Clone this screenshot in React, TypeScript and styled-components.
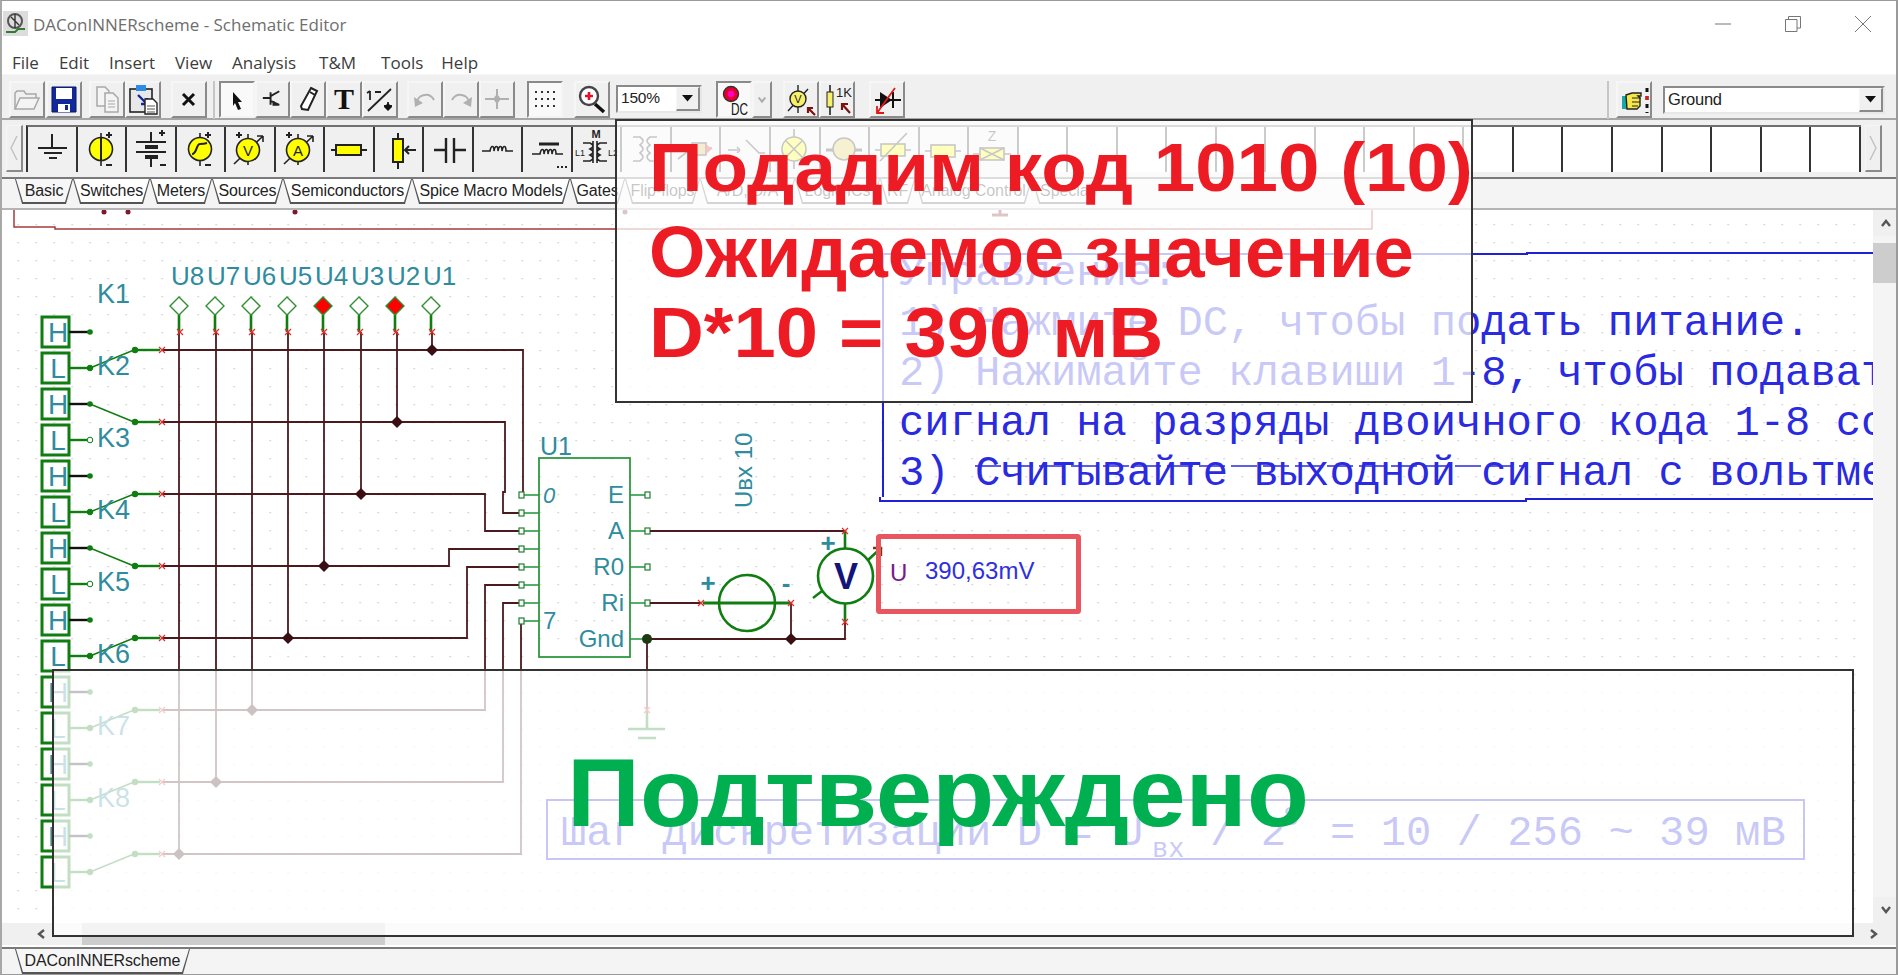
import React from "react";
import styled, { createGlobalStyle } from "styled-components";

const Global = createGlobalStyle`
  html, body { margin: 0; padding: 0; background: #fff; overflow: hidden; }
  * { box-sizing: border-box; }
`;

const Root = styled.div`
  position: relative;
  width: 1898px;
  height: 975px;
  overflow: hidden;
  display: flex;
  flex-direction: column;
  background: #fff;
  font-family: "Liberation Sans", Arial, sans-serif;
`;
const WindowFrame = styled.div`
  position: absolute;
  inset: 0;
  border-top: 1px solid #9a9a9a;
  border-right: 2px solid #9a9a9a;
  border-bottom: 1px solid #9a9a9a;
  border-left: 2px solid #a8a8a8;
  pointer-events: none;
`;
const TitleBar = styled.div`
  height: 37px;
  flex: none;
  display: flex;
  align-items: center;
  padding: 10px 0 0 3px;
  color: #6e6e6e;
  font: 17px "Open Sans", "Noto Sans", sans-serif;
`;
const TitleText = styled.span`
  margin: 2px 0 0 5px;
  flex: 1;
`;
const WinButton = styled.div`
  width: 70px;
  display: flex;
  justify-content: center;
  align-items: center;
`;
const MenuBar = styled.div`
  height: 37px;
  flex: none;
  display: flex;
  gap: 20px;
  align-items: center;
  padding: 13px 0 0 12px;
  color: #3c3c3c;
  font: 17px "Open Sans", "Noto Sans", sans-serif;
`;
const MenuItem = styled.span<{ $ml?: number }>`
  margin-left: ${(p) => p.$ml ?? 0}px;
`;
const ToolBar = styled.div`
  height: 46px;
  flex: none;
  display: flex;
  align-items: flex-start;
  padding: 6px 0 0 9px;
  background: #f0f0f0;
  border-top: 1px solid #f6f6f6;
  border-bottom: 2px solid #a6a6a6;
`;
const ToolButton = styled.div<{ $w?: number; $ml?: number; $on?: boolean }>`
  width: ${(p) => p.$w ?? 36}px;
  height: 37px;
  flex: none;
  margin-left: ${(p) => p.$ml ?? 0}px;
  display: flex;
  align-items: center;
  justify-content: center;
  background: ${(p) => (p.$on ? "#f9f9f9" : "#f0f0f0")};
  border-style: solid;
  border-width: 2px;
  border-color: ${(p) => (p.$on ? "#8a8a8a #f4f4f4 #f4f4f4 #8a8a8a" : "#f6f6f6 #8a8a8a #8a8a8a #f6f6f6")};
`;
const Separator = styled.div<{ $ml: number }>`
  width: 2px;
  height: 38px;
  flex: none;
  margin-left: ${(p) => p.$ml}px;
  background: #c6c6c6;
`;
const ComboBox = styled.div<{ $w: number; $ml: number; $mt?: number; $fs?: number }>`
  width: ${(p) => p.$w}px;
  height: 28px;
  flex: none;
  margin: ${(p) => p.$mt ?? 4}px 0 0 ${(p) => p.$ml}px;
  display: flex;
  background: #fff;
  border-style: solid;
  border-width: 2px;
  border-color: #8a8a8a #e8e8e8 #e8e8e8 #8a8a8a;
  font: ${(p) => p.$fs ?? 15.5}px "Liberation Sans", sans-serif;
  color: #222;
`;
const ComboText = styled.div`
  flex: 1;
  padding: 2px 0 0 3px;
  letter-spacing: -0.2px;
`;
const ComboArrow = styled.div`
  width: 24px;
  display: flex;
  align-items: center;
  justify-content: center;
  background: #f0f0f0;
  border-style: solid;
  border-width: 1px 2px 2px 1px;
  border-color: #f6f6f6 #8a8a8a #8a8a8a #f6f6f6;
`;
const Palette = styled.div`
  height: 59px;
  flex: none;
  display: flex;
  align-items: flex-start;
  padding: 5px 0 0 6px;
  background: #f0f0f0;
  border-bottom: 2px solid #7a7a7a;
`;
const Scroller = styled.div<{ $ml?: number }>`
  width: 17px;
  height: 47px;
  flex: none;
  margin-left: ${(p) => p.$ml ?? 0}px;
  display: flex;
  align-items: center;
  justify-content: center;
  background: #f0f0f0;
  border-style: solid;
  border-width: 1px 2px 2px 1px;
  border-color: #f6f6f6 #8a8a8a #8a8a8a #f6f6f6;
`;
const CellRow = styled.div`
  margin-left: 3px;
  display: flex;
  height: 47px;
  border-top: 2px solid #707070;
  border-left: 2px solid #333;
`;
const Cell = styled.div<{ $empty?: boolean }>`
  width: 49.54px;
  height: 100%;
  flex: none;
  display: flex;
  align-items: center;
  justify-content: center;
  background: ${(p) => (p.$empty ? "#ffffff" : "#f0f0f0")};
  border-right: 2px solid #333;
`;
const TabStrip = styled.div`
  height: 31px;
  flex: none;
  display: flex;
  padding: 0 0 0 15px;
  background: #f4f4f4;
  border-bottom: 2px solid #b4b4b4;
`;
const TabOuter = styled.div<{ $w: number }>`
  width: ${(p) => p.$w}px;
  height: 25px;
  flex: none;
  padding: 0 1px 2px 1px;
  background: #555;
  clip-path: polygon(0 0, 100% 0, calc(100% - 7px) 100%, 7px 100%);
`;
const TabInner = styled.div<{ $active?: boolean }>`
  height: 100%;
  display: flex;
  align-items: center;
  justify-content: center;
  padding-top: 1px;
  background: ${(p) => (p.$active ? "#f6f6f6" : "#fff")};
  clip-path: polygon(0 0, 100% 0, calc(100% - 7px) 100%, 7px 100%);
  font: 16px "Liberation Sans", sans-serif;
  letter-spacing: -0.1px;
  color: #222;
  white-space: nowrap;
`;
const Workspace = styled.div`
  flex: 1;
  display: flex;
  min-height: 0;
`;
const CanvasArea = styled.div`
  width: 1873px;
  flex: none;
  background: #fff;
  overflow: hidden;
`;
const VScroll = styled.div`
  flex: 1;
  display: flex;
  flex-direction: column;
  align-items: stretch;
  background: #f4f4f4;
`;
const ScrollEnd = styled.div`
  height: 26px;
  display: flex;
  align-items: center;
  justify-content: center;
  flex: none;
  background: #f0f0f0;
`;
const VThumb = styled.div`
  height: 40px;
  margin-top: 7px;
  flex: none;
  background: #cdcdcd;
`;
const Spacer = styled.div`
  flex: 1;
`;
const HScroll = styled.div`
  height: 22px;
  flex: none;
  display: flex;
  align-items: stretch;
  background: #f0f0f0;
`;
const HEnd = styled.div<{ $w: number }>`
  width: ${(p) => p.$w}px;
  flex: none;
  display: flex;
  align-items: center;
  justify-content: center;
`;
const HThumb = styled.div`
  width: 303px;
  flex: none;
  background: #cdcdcd;
`;
const BottomTabs = styled.div`
  height: 28px;
  flex: none;
  margin-top: 2px;
  display: flex;
  padding-left: 15px;
  background: #f4f4f4;
  border-top: 2px solid #7a7a7a;
`;
const BottomTab = styled(TabOuter)`
  height: 25px;
`;
const Overlay = styled.div<{ $pt: number; $pl: number }>`
  position: absolute;
  padding: ${(p) => p.$pt}px 0 0 ${(p) => p.$pl}px;
  background: rgba(255, 255, 255, 0.75);
  border: 2.5px solid #333;
  font-family: "Liberation Sans", Arial, sans-serif;
  font-weight: 700;
  line-height: 1;
  white-space: nowrap;
`;
const TopOverlay = styled(Overlay)`
  left: 615px;
  top: 119px;
  width: 858px;
  height: 284px;
  color: #ed1c24;
`;
const BottomOverlay = styled(Overlay)`
  left: 52px;
  top: 669px;
  width: 1802px;
  height: 268px;
  color: #00b050;
`;
const OverlayLine = styled.div<{ $mt?: number; $fs: number; $sx?: number }>`
  margin-top: ${(p) => p.$mt ?? 0}px;
  font-size: ${(p) => p.$fs}px;
  transform-origin: left center;
  transform: scaleX(${(p) => p.$sx ?? 1});
`;
const SchemText = styled.text`
  font-family: "Liberation Sans", Arial, sans-serif;
  fill: #2f8c9e;
`;
const NoteText = styled.text<{ $small?: boolean }>`
  font-family: "Liberation Mono", "Courier New", monospace;
  font-size: ${(p) => (p.$small ? 27 : 42.2)}px;
  fill: #2a2ae0;
`;
const IconText = styled.text`
  font-family: "Liberation Sans", Arial, sans-serif;
`;

const Svg36: React.FC<{ children: React.ReactNode; w?: number; h?: number }> = ({ children, w = 32, h = 33 }) => (
  <svg width={w} height={h} viewBox={`0 0 ${w} ${h}`} fill="none">
    {children}
  </svg>
);
const Cellsvg: React.FC<{ children: React.ReactNode }> = ({ children }) => (
  <svg width="47" height="45" viewBox="0 0 47 45" fill="none" stroke="#222" strokeWidth="1.6">
    {children}
  </svg>
);
const Plus = ({ x, y }: { x: number; y: number }) => <path d={`M${x - 3} ${y}h6M${x} ${y - 3}v6`} stroke="#222" strokeWidth="2" />;
const Dash = ({ x, y }: { x: number; y: number }) => <path d={`M${x - 3} ${y}h6`} stroke="#222" strokeWidth="2" />;
const Coil = ({ x, y }: { x: number; y: number }) => (
  <path d={`M${x} ${y}h8c1-6 4-6 4 0c1-6 4-6 4 0c1-6 4-6 4 0c1-6 4-6 4 0h7`} strokeWidth="1.6" />
);

const Chevron = ({ dir, color = "#555", size = 12 }: { dir: "u" | "d" | "l" | "r"; color?: string; size?: number }) => {
  const pts = { u: "2,9 6,4 10,9", d: "2,3 6,8 10,3", l: "9,2 4,6 9,10", r: "3,2 8,6 3,10" }[dir];
  return (
    <svg width={size} height={size} viewBox="0 0 12 12" fill="none">
      <polyline points={pts} stroke={color} strokeWidth="2.4" />
    </svg>
  );
};
const DownArrow = () => (
  <svg width="11" height="7" viewBox="0 0 11 7">
    <polygon points="0,0 11,0 5.5,6.5" fill="#111" />
  </svg>
);

const menu: [string, number][] = [
  ["File", 0],
  ["Edit", 0],
  ["Insert", 0],
  ["View", 0],
  ["Analysis", 0],
  ["T&M", 3],
  ["Tools", 5],
  ["Help", -2],
];
const tabs: [string, number][] = [
  ["Basic", 58],
  ["Switches", 77],
  ["Meters", 62],
  ["Sources", 71],
  ["Semiconductors", 129],
  ["Spice Macro Models", 158],
  ["Gates", 55],
  ["Flip-flops", 75],
  ["A/D, D/A", 95],
  ["Logic ICs", 85],
  ["RF", 35],
  ["Analog Control", 117],
  ["Special", 68],
];

const AppIcon = () => (
  <svg width="25" height="25" viewBox="0 0 25 25" fill="none">
    <rect width="25" height="25" fill="#dcdcdc" />
    <circle cx="12" cy="10" r="7" stroke="#555" strokeWidth="2" />
    <path d="M8 6l8 8M12 3v14" stroke="#333" strokeWidth="1.4" />
    <path d="M3 21h9l3-3h7" stroke="#2e7d32" strokeWidth="2" />
  </svg>
);

const toolIcons = {
  open: (
    <Svg36>
      <path d="M4 26V10l2-2h7l2 3h10v4" stroke="#a8a8a8" strokeWidth="1.5" />
      <path d="M4 26l5-11h19l-5 11z" fill="#f4f4f4" stroke="#a8a8a8" strokeWidth="1.5" />
    </Svg36>
  ),
  save: (
    <Svg36>
      <path d="M4 4h24v25H4z" fill="#12279a" stroke="#0a1760" strokeWidth="1" />
      <rect x="8" y="5" width="16" height="11" fill="#fff" />
      <rect x="10" y="21" width="12" height="8" fill="#fff" />
      <rect x="17" y="22" width="3" height="5" fill="#12279a" />
    </Svg36>
  ),
  copy: (
    <Svg36>
      <path d="M6 4h8l4 4v15H6z" fill="#f4f4f4" stroke="#a8a8a8" strokeWidth="1.5" />
      <path d="M14 10h8l5 5v14H14z" fill="#f4f4f4" stroke="#a8a8a8" strokeWidth="1.5" />
      <path d="M17 18h7M17 21h7M17 24h7" stroke="#a8a8a8" />
    </Svg36>
  ),
  paste: (
    <Svg36>
      <rect x="3" y="6" width="22" height="23" fill="#e8e8e8" stroke="#222" strokeWidth="1.6" />
      <rect x="9" y="2" width="10" height="6" fill="#2e8be6" />
      <path d="M11 12l9 9m0-6v6h-6" stroke="#12279a" strokeWidth="2.4" />
      <path d="M18 16h8l4 4v11H18z" fill="#fff" stroke="#222" strokeWidth="1.4" />
      <path d="M20 23h8M20 26h8M20 29h8" stroke="#555" />
    </Svg36>
  ),
  del: (
    <Svg36>
      <path d="M10 11l11 11M21 11L10 22" stroke="#111" strokeWidth="3" />
    </Svg36>
  ),
  select: (
    <Svg36>
      <path d="M12 9l9 10h-4l3 7-3 1-3-7-2 3z" fill="#111" />
    </Svg36>
  ),
  wire: (
    <Svg36>
      <path d="M6 15h8M14 9v13M14 13l9-5M14 18l9 4M23 22h-6v-4" stroke="#222" strokeWidth="2" />
    </Svg36>
  ),
  pen: (
    <Svg36>
      <path d="M19 5l6 3-9 19-6-1-1-3z" fill="#fff" stroke="#222" strokeWidth="2" />
      <path d="M18 9l5 3" stroke="#222" strokeWidth="2" />
    </Svg36>
  ),
  text: (
    <Svg36>
      <text x="16" y="26" textAnchor="middle" fontFamily="Liberation Serif, serif" fontWeight="700" fontSize="30" fill="#111">
        T
      </text>
    </Svg36>
  ),
  flip: (
    <Svg36>
      <path d="M4 28L27 6M6 8v9M3 10l3-2M11 9h6M20 23h8M24 19v8" stroke="#222" strokeWidth="1.8" />
      <path d="M24 20l4 4-4 4-4-4z" fill="#111" />
    </Svg36>
  ),
  undo: (
    <Svg36>
      <path d="M8 21c-1-9 12-13 17-4" stroke="#b0b0b0" strokeWidth="2" />
      <path d="M5 14l1 10 8-4z" fill="#b0b0b0" />
    </Svg36>
  ),
  redo: (
    <Svg36>
      <path d="M24 21c1-9-12-13-17-4" stroke="#b0b0b0" strokeWidth="2" />
      <path d="M27 14l-1 10-8-4z" fill="#b0b0b0" />
    </Svg36>
  ),
  star: (
    <Svg36>
      <path d="M4 16h24M16 6v20" stroke="#b0b0b0" strokeWidth="2" />
      <path d="M16 11l4 5-4 5-4-5z" fill="#b0b0b0" />
    </Svg36>
  ),
  grid: (
    <Svg36>
      <path d="M6 9h20M6 16h20M6 23h20" stroke="#333" strokeWidth="2" strokeDasharray="2 4" />
    </Svg36>
  ),
  zoom: (
    <Svg36>
      <path d="M19 21l9 8" stroke="#111" strokeWidth="3.4" />
      <circle cx="13" cy="13" r="9" fill="#fff" stroke="#444" strokeWidth="2.4" />
      <path d="M9 13h8M13 9v8" stroke="#e8112d" strokeWidth="2.6" />
    </Svg36>
  ),
  dc: (
    <Svg36 w={32}>
      <circle cx="13" cy="11" r="7.5" fill="#e4002b" stroke="#333" strokeWidth="1.4" />
      <circle cx="13" cy="11" r="3.2" fill="#f0c" />
      <IconText x="13" y="32" fontSize="16" fill="#111" textLength="17" lengthAdjust="spacingAndGlyphs">
        DC
      </IconText>
    </Svg36>
  ),
  meter: (
    <Svg36>
      <path d="M13 2v28M3 28L23 6" stroke="#222" strokeWidth="1.4" />
      <circle cx="13" cy="16" r="8" fill="#f7f06a" stroke="#222" strokeWidth="1.4" />
      <IconText x="13" y="20" textAnchor="middle" fontSize="11" fill="#222">
        V
      </IconText>
      <path d="M30 32l-7-7m0 5v-5h5" stroke="#7a1212" strokeWidth="2.2" />
    </Svg36>
  ),
  ohm: (
    <Svg36>
      <path d="M9 2v30" stroke="#222" strokeWidth="1.6" />
      <rect x="6" y="9" width="6" height="15" fill="#f7f06a" stroke="#222" />
      <IconText x="15" y="14" fontSize="13" fill="#222">
        1K
      </IconText>
      <path d="M29 30l-8-9m0 6v-6h6" stroke="#7a1212" strokeWidth="2.2" />
    </Svg36>
  ),
  diode: (
    <Svg36>
      <path d="M4 17h26M22 9v16" stroke="#111" strokeWidth="2" />
      <path d="M9 9l12 8-12 8z" fill="#111" />
      <path d="M24 5L6 30m0-7v7h7" stroke="#e01818" strokeWidth="1.8" />
    </Svg36>
  ),
  hand: (
    <Svg36>
      <path d="M4 13h5v13H4z" fill="#19a7a7" />
      <path d="M8 12l6-2h9v3h-3l2 2v8l-3 3H9z" fill="#f7e64a" stroke="#222" strokeWidth="1.4" />
      <path d="M14 15h9M14 19h8M14 23h6" stroke="#222" strokeWidth="1.2" />
      <path d="M29 5v4M29 13v4M29 21v4M29 29v1" stroke="#111" strokeWidth="3" />
      <path d="M29 13v4" stroke="#e01818" strokeWidth="3" />
    </Svg36>
  ),
};

const Source = ({ children }: { children?: React.ReactNode }) => (
  <>
    <path d="M23 6v33" />
    <circle cx="23" cy="22" r="11.5" fill="#ff0" stroke="#222" strokeWidth="1.6" />
    {children}
  </>
);
const Meter = ({ label }: { label: string }) => (
  <>
    <path d="M22 7v31M8 37L37 9M37 9h-6M37 9v6" />
    <circle cx="22" cy="23" r="11.5" fill="#ff0" stroke="#222" strokeWidth="1.6" />
    <IconText x="22" y="28.5" textAnchor="middle" fontSize="15" fill="#222" stroke="none">
      {label}
    </IconText>
    <Plus x={13} y={8} />
  </>
);
const paletteIcons: React.ReactNode[] = [
  <Cellsvg key="g">
    <path d="M24 7v14M10 21h29M16 26h18M21 31h8" strokeWidth="2" />
  </Cellsvg>,
  <Cellsvg key="v">
    <Source>
      <path d="M23 10v24" strokeWidth="2" />
    </Source>
    <Plus x={31} y={8} />
    <Dash x={31} y={38} />
  </Cellsvg>,
  <Cellsvg key="b">
    <path d="M24 5v10M9 15h30M24 30v10M9 25h30" strokeWidth="2" />
    <path d="M18 20h13M18 30h13" strokeWidth="4" />
    <Plus x={35} y={6} />
    <Dash x={36} y={38} />
  </Cellsvg>,
  <Cellsvg key="s">
    <Source>
      <path d="M15 27c5 0 4-10 8-10s4 0 7-1" strokeWidth="2" />
    </Source>
    <Plus x={31} y={8} />
    <Dash x={31} y={38} />
  </Cellsvg>,
  <Cellsvg key="m1">
    <Meter label="V" />
  </Cellsvg>,
  <Cellsvg key="m2">
    <Meter label="A" />
  </Cellsvg>,
  <Cellsvg key="r">
    <path d="M6 23h36" strokeWidth="2" />
    <rect x="11" y="18" width="25" height="10" fill="#ff0" stroke="#222" strokeWidth="2" />
  </Cellsvg>,
  <Cellsvg key="p">
    <path d="M23 6v36" strokeWidth="2" />
    <rect x="18" y="12" width="10" height="23" fill="#ff0" stroke="#222" strokeWidth="2" />
    <path d="M41 23H30m4-4l-4 4 4 4" strokeWidth="2" />
  </Cellsvg>,
  <Cellsvg key="c">
    <path d="M9 23h12M30 23h11M21 11v25M29 11v25" strokeWidth="2.4" />
  </Cellsvg>,
  <Cellsvg key="l">
    <Coil x={8} y={24} />
  </Cellsvg>,
  <Cellsvg key="lc">
    <path d="M15 17h20" strokeWidth="3" />
    <Coil x={8} y={27} />
    <path d="M33 40h2M37 40h2M41 40h2" strokeWidth="2" />
  </Cellsvg>,
  <Cellsvg key="t">
    <IconText x="23" y="11" textAnchor="middle" fontSize="11" fontWeight="700" fill="#222" stroke="none">
      M
    </IconText>
    <path d="M10 16h7c4 2 4 4 0 6c4 2 4 4 0 6c4 2 4 4 0 6h-7M34 16h-7c-4 2-4 4 0 6c-4 2-4 4 0 6c-4 2-4 4 0 6h7M20 14v22M24 14v22" strokeWidth="1.6" />
    <IconText x="2" y="29" fontSize="9" fill="#222" stroke="none">
      L1
    </IconText>
    <IconText x="35" y="29" fontSize="9" fill="#222" stroke="none">
      L2
    </IconText>
  </Cellsvg>,
  <Cellsvg key="t2">
    <path d="M10 10h7c4 3 4 5 0 8c4 3 4 5 0 8c4 3 4 5 0 8h-7M34 10h-7c-4 3-4 5 0 8c-4 3-4 5 0 8c-4 3-4 5 0 8h7" strokeWidth="1.6" />
  </Cellsvg>,
  <Cellsvg key="led">
    <path d="M6 32L20 21M26 21h14" />
    <rect x="20" y="16" width="14" height="12" fill="#d6b84a" />
    <path d="M34 17l6 5-6 5z" fill="#e01818" stroke="none" />
  </Cellsvg>,
  <Cellsvg key="sw">
    <path d="M6 23h10M18 23l-3-3m3 3l-3 3M24 13l13 13h6" />
  </Cellsvg>,
  <Cellsvg key="lamp">
    <path d="M23 2v8M23 34v8" />
    <circle cx="23" cy="22" r="12" fill="#ff0" stroke="#222" />
    <path d="M15 14l16 16M31 14L15 30" />
  </Cellsvg>,
  <Cellsvg key="bulb">
    <path d="M5 23h8M33 23h8" strokeWidth="3" />
    <circle cx="23" cy="22" r="11" fill="#d6c84a" stroke="#222" />
  </Cellsvg>,
  <Cellsvg key="var">
    <path d="M5 23h36" />
    <rect x="11" y="17" width="24" height="12" fill="#ff0" stroke="#222" />
    <path d="M10 34L37 6" />
  </Cellsvg>,
  <Cellsvg key="fuse">
    <path d="M5 24h36" />
    <rect x="11" y="18" width="24" height="12" fill="#ff0" stroke="#222" />
  </Cellsvg>,
  <Cellsvg key="z">
    <IconText x="23" y="14" textAnchor="middle" fontSize="14" fill="#222" stroke="none">
      Z
    </IconText>
    <path d="M4 27h38" />
    <rect x="11" y="21" width="24" height="12" fill="#ff0" stroke="#222" />
    <path d="M11 21l24 12M35 21L11 33" />
  </Cellsvg>,
];

const Cross = ({ x, y }: { x: number; y: number }) => (
  <path d={`M${x - 3} ${y - 3}l6 6M${x + 3} ${y - 3}l-6 6`} stroke="#e52a2a" strokeWidth="1.2" fill="none" />
);
const Node = ({ x, y, fill = "#3a0e12" }: { x: number; y: number; fill?: string }) => (
  <polygon points={`${x - 6},${y} ${x},${y - 6} ${x + 6},${y} ${x},${y + 6}`} fill={fill} />
);
const Pin = ({ x, y }: { x: number; y: number }) => (
  <rect x={x - 2.5} y={y - 3} width="5" height="6" fill="#fff" stroke="#1f7f2f" strokeWidth="1.2" />
);

const WIRE = "#4a1a1e";
const G = "#0f7d10";
const outs: number[][] = [
  [162, 350, 523, 350, 523, 495],
  [162, 422, 505, 422, 505, 492, 503, 492, 503, 513, 522, 513],
  [162, 494, 485, 494, 485, 531, 522, 531],
  [162, 566, 449, 566, 449, 549, 522, 549],
  [162, 638, 467, 638, 467, 567, 522, 567],
  [162, 710, 485, 710, 485, 585, 522, 585],
  [162, 782, 503, 782, 503, 603, 522, 603],
  [162, 854, 521, 854, 521, 621],
];
const probes = [
  { x: 179, wx: 179, end: 854, name: "U8", on: false },
  { x: 215, wx: 216, end: 782, name: "U7", on: false },
  { x: 251, wx: 252, end: 710, name: "U6", on: false },
  { x: 287, wx: 288, end: 638, name: "U5", on: false },
  { x: 323, wx: 324, end: 566, name: "U4", on: true },
  { x: 359, wx: 361, end: 494, name: "U3", on: false },
  { x: 395, wx: 397, end: 422, name: "U2", on: true },
  { x: 431, wx: 432, end: 350, name: "U1", on: false },
];
const hSelected = [false, true, false, true, false, false, false, false];
const leftPins = [495, 513, 531, 549, 567, 585, 603, 621];
const rightPins: [string, number][] = [
  ["E", 495],
  ["A", 531],
  ["R0", 567],
  ["Ri", 603],
  ["Gnd", 639],
];

const Schematic = () => (
  <svg width="1873" height="713" viewBox="0 210 1873 713" fill="none" style={{ display: "block" }}>
    <defs>
      <pattern id="dots" x="-0.5" y="8" width="18" height="18" patternUnits="userSpaceOnUse">
        <rect width="1.3" height="1.3" fill="#c4c4c4" />
      </pattern>
    </defs>
    <rect x="10" y="215" width="1850" height="700" fill="url(#dots)" />

    <polyline points="14,210 14,227 55,227 55,229 1372,229 1372,210" stroke="#a83a3a" strokeWidth="1.5" />
    {[104, 128, 295, 625].map((x) => (
      <circle key={x} cx={x} cy="212" r="2.5" fill="#7a1a2a" />
    ))}
    <path d="M1000 210v4M992 215h16" stroke="#7a1a2a" strokeWidth="3" />

    {outs.map((pts, i) => (
      <polyline key={i} points={pts.join(",")} stroke={WIRE} strokeWidth="1.8" />
    ))}

    {probes.map((p) => (
      <g key={p.name}>
        <line x1={p.wx} y1="332" x2={p.wx} y2={p.end} stroke={WIRE} strokeWidth="1.8" />
        <Node x={p.wx} y={p.end} />
        <path d={`M${p.x} 315V332`} stroke={G} strokeWidth="2.6" />
        <polygon
          points={`${p.x - 9},306 ${p.x},297 ${p.x + 9},306 ${p.x},315`}
          fill={p.on ? "#f00" : "#fff"}
          stroke="#2d8f2d"
          strokeWidth="1.4"
        />
        <Cross x={p.x + 1} y={332} />
        <SchemText x={p.x - 8} y="285" fontSize="26">
          {p.name}
        </SchemText>
      </g>
    ))}

    {hSelected.map((h, i) => {
      const yH = 332 + i * 72;
      const yL = 368 + i * 72;
      const yO = 350 + i * 72;
      return (
        <g key={i}>
          <rect x="42" y={yH - 15} width="27" height="30" fill="#fff" stroke={G} strokeWidth="3" />
          <rect x="42" y={yL - 15} width="27" height="30" fill="#fff" stroke={G} strokeWidth="3" />
          <SchemText x="58" y={yH + 10} fontSize="28" textAnchor="middle">
            H
          </SchemText>
          <SchemText x="58" y={yL + 10} fontSize="28" textAnchor="middle">
            L
          </SchemText>
          <path d={`M69 ${yH}H90`} stroke="#111" strokeWidth="2.4" />
          <path d={`M69 ${yL}H90`} stroke={G} strokeWidth="2.4" />
          <circle cx="90" cy={yH} r="2.8" fill={G} />
          <circle cx="90" cy={yL} r="2.8" fill={h ? "#fff" : G} stroke={G} strokeWidth="1" />
          <path d={`M90 ${h ? yH : yL}L134 ${yO}`} stroke={G} strokeWidth="1.4" />
          <path d={`M134 ${yO}H160`} stroke={G} strokeWidth="2.4" />
          <circle cx="135" cy={yO} r="3.2" fill={G} />
          <Cross x={162} y={yO} />
          <SchemText x="97" y={303 + i * 72} fontSize="27">
            {`K${i + 1}`}
          </SchemText>
        </g>
      );
    })}

    <rect x="539" y="458" width="91" height="199" fill="none" stroke="#2d9a3f" strokeWidth="1.8" />
    <SchemText x="540" y="455" fontSize="25">
      U1
    </SchemText>
    <SchemText x="543" y="503" fontSize="22" fontStyle="italic">
      0
    </SchemText>
    <SchemText x="543" y="629" fontSize="24">
      7
    </SchemText>
    {leftPins.map((y) => (
      <g key={y}>
        <path d={`M524 ${y}H539`} stroke="#2d9a3f" strokeWidth="1.6" />
        <Pin x={521.5} y={y} />
      </g>
    ))}
    {rightPins.map(([label, y]) => (
      <g key={label}>
        <path d={`M630 ${y}H645`} stroke="#2d9a3f" strokeWidth="1.6" />
        <Pin x={647.5} y={y} />
        <SchemText x="624" y={y + 8} fontSize="24" textAnchor="end">
          {label}
        </SchemText>
      </g>
    ))}
    <SchemText x="752" y="508" fontSize="24" transform="rotate(-90 752 508)">
      Uвх 10
    </SchemText>

    <polyline points="650,531 845,531" stroke={WIRE} strokeWidth="1.8" />
    <polyline points="650,603 701,603" stroke={WIRE} strokeWidth="1.8" />
    <polyline points="647,639 845,639 845,622" stroke={WIRE} strokeWidth="1.8" />
    <polyline points="791,603 791,639" stroke={WIRE} strokeWidth="1.8" />
    <polyline points="647,639 647,710" stroke={WIRE} strokeWidth="1.8" />
    <Node x={791} y={639} />
    <circle cx="647" cy="639" r="5" fill="#1f3a12" />

    <path d="M647 711V728M628 729H665M638 738H656" stroke={G} strokeWidth="2.6" />
    <Cross x={647} y={710} />

    <ellipse cx="747" cy="603" rx="28" ry="28" stroke={G} strokeWidth="2.6" />
    <path d="M703 603H790" stroke={G} strokeWidth="3" />
    <Cross x={701} y={603} />
    <Cross x={791} y={603} />
    <SchemText x="708" y="592" fontSize="26" fontWeight="700" textAnchor="middle">
      +
    </SchemText>
    <SchemText x="786" y="592" fontSize="26" fontWeight="700" textAnchor="middle">
      -
    </SchemText>

    <path d="M845 531V548M845 604V622" stroke={G} strokeWidth="2.6" />
    <circle cx="845.5" cy="576" r="27.5" stroke={G} strokeWidth="2.6" fill="#fff" />
    <path d="M813 598l9-7" stroke={G} strokeWidth="2.4" />
    <path d="M868 560l13-12" stroke={G} strokeWidth="2.6" />
    <path d="M873 548h8v8" stroke="#7a3a10" strokeWidth="2.4" />
    <Cross x={845} y={531} />
    <Cross x={845} y={622} />
    <SchemText x="828" y="552" fontSize="26" fontWeight="700" textAnchor="middle">
      +
    </SchemText>
    <text x="846" y="589" fontFamily="Liberation Sans, sans-serif" fontSize="36" fontWeight="700" fill="#141478" textAnchor="middle">
      V
    </text>

    <rect x="878.5" y="536.5" width="200" height="75" rx="1" stroke="#e8565f" strokeWidth="5" />
    <text x="890" y="581" fontFamily="Liberation Sans, sans-serif" fontSize="24" fill="#7a1a8a">
      U
    </text>
    <text x="925" y="579" fontFamily="Liberation Sans, sans-serif" fontSize="24" fill="#2f2fe0">
      390,63mV
    </text>

    <polyline points="883,497 883,254 1527,254 1527,253 1873,253" stroke="#2020d8" strokeWidth="2" />
    <polyline points="880,497 880,501 1526,501 1526,499 1873,499" stroke="#2020d8" strokeWidth="2" />
    <path d="M975 466H1525" stroke="#2a2ae0" strokeWidth="1.4" strokeDasharray="26 6" />
    <NoteText x="899" y="285">Управление:</NoteText>
    <NoteText x="899" y="335">1) Нажмите DC, чтобы подать питание.</NoteText>
    <NoteText x="899" y="385">2) Нажимайте клавиши 1-8, чтобы подавать</NoteText>
    <NoteText x="899" y="435">сигнал на разряды двоичного кода 1-8 со</NoteText>
    <NoteText x="899" y="485">3) Считывайте выходной сигнал с вольтметра</NoteText>

    <rect x="547" y="800" width="1257" height="59" stroke="#2020d8" strokeWidth="2" />
    <NoteText x="561" y="845">Шаг дискретизации D = U</NoteText>
    <NoteText x="1152" y="857" $small>вх</NoteText>
    <NoteText x="1210" y="845">/ 2</NoteText>
    <NoteText x="1283" y="825" $small>8</NoteText>
    <NoteText x="1330" y="845">= 10 / 256 ~ 39 мВ</NoteText>
  </svg>
);

export default function App() {
  return (
    <Root>
      <Global />
      <TitleBar>
        <AppIcon />
        <TitleText>DAConINNERscheme - Schematic Editor</TitleText>
        <WinButton>
          <svg width="16" height="2" viewBox="0 0 16 2">
            <path d="M0 1h16" stroke="#777" strokeWidth="1" />
          </svg>
        </WinButton>
        <WinButton>
          <svg width="16" height="16" viewBox="0 0 16 16" fill="none" stroke="#777">
            <path d="M.5 3.5h11.5v12H.5zM3.5 3.5v-3h12v11.5H12" />
          </svg>
        </WinButton>
        <WinButton>
          <svg width="16" height="16" viewBox="0 0 16 16" fill="none" stroke="#777">
            <path d="M0 0l16 16M16 0L0 16" />
          </svg>
        </WinButton>
      </TitleBar>
      <MenuBar>
        {menu.map(([m, ml]) => (
          <MenuItem key={m} $ml={ml}>
            {m}
          </MenuItem>
        ))}
      </MenuBar>
      <ToolBar>
        <ToolButton>{toolIcons.open}</ToolButton>
        <ToolButton $ml={1}>{toolIcons.save}</ToolButton>
        <ToolButton $ml={7}>{toolIcons.copy}</ToolButton>
        <ToolButton $ml={0}>{toolIcons.paste}</ToolButton>
        <ToolButton $ml={10}>{toolIcons.del}</ToolButton>
        <Separator $ml={6} />
        <ToolButton $ml={4} $on>
          {toolIcons.select}
        </ToolButton>
        <ToolButton $w={35}>{toolIcons.wire}</ToolButton>
        <ToolButton>{toolIcons.pen}</ToolButton>
        <ToolButton>{toolIcons.text}</ToolButton>
        <ToolButton>{toolIcons.flip}</ToolButton>
        <ToolButton $ml={9}>{toolIcons.undo}</ToolButton>
        <ToolButton>{toolIcons.redo}</ToolButton>
        <ToolButton>{toolIcons.star}</ToolButton>
        <ToolButton $ml={12} $on>
          {toolIcons.grid}
        </ToolButton>
        <ToolButton $ml={11}>{toolIcons.zoom}</ToolButton>
        <ComboBox $w={86} $ml={6}>
          <ComboText>150%</ComboText>
          <ComboArrow>
            <DownArrow />
          </ComboArrow>
        </ComboBox>
        <ToolButton $ml={14} $on>
          {toolIcons.dc}
        </ToolButton>
        <ToolButton $w={20}>
          <Chevron dir="d" color="#aaa" size={10} />
        </ToolButton>
        <ToolButton $ml={11}>{toolIcons.meter}</ToolButton>
        <ToolButton>{toolIcons.ohm}</ToolButton>
        <ToolButton $ml={14}>{toolIcons.diode}</ToolButton>
        <Separator $ml={702} />
        <ToolButton $ml={7}>{toolIcons.hand}</ToolButton>
        <ComboBox $w={222} $ml={11} $mt={5} $fs={16.5}>
          <ComboText>Ground</ComboText>
          <ComboArrow>
            <DownArrow />
          </ComboArrow>
        </ComboBox>
      </ToolBar>
      <Palette>
        <Scroller>
          <svg width="8" height="26" viewBox="0 0 8 26" fill="none">
            <path d="M7 1L1 13l6 12" stroke="#c0c0c0" strokeWidth="1.4" />
          </svg>
        </Scroller>
        <CellRow>
          {Array.from({ length: 37 }).map((_, i) => (
            <Cell key={i} $empty={i >= 20}>
              {paletteIcons[i]}
            </Cell>
          ))}
        </CellRow>
        <Scroller $ml={4}>
          <svg width="8" height="26" viewBox="0 0 8 26" fill="none">
            <path d="M1 1l6 12-6 12" stroke="#c0c0c0" strokeWidth="1.4" />
          </svg>
        </Scroller>
      </Palette>
      <TabStrip>
        {tabs.map(([t, w], i) => (
          <TabOuter key={t} $w={w}>
            <TabInner $active={i === 0}>{t}</TabInner>
          </TabOuter>
        ))}
      </TabStrip>
      <Workspace>
        <CanvasArea>
          <Schematic />
        </CanvasArea>
        <VScroll>
          <ScrollEnd>
            <Chevron dir="u" />
          </ScrollEnd>
          <VThumb />
          <Spacer />
          <ScrollEnd>
            <Chevron dir="d" />
          </ScrollEnd>
        </VScroll>
      </Workspace>
      <HScroll>
        <HEnd $w={82}>
          <Chevron dir="l" />
        </HEnd>
        <HThumb />
        <Spacer />
        <HEnd $w={49}>
          <Chevron dir="r" />
        </HEnd>
      </HScroll>
      <BottomTabs>
        <BottomTab $w={175}>
          <TabInner $active>DAConINNERscheme</TabInner>
        </BottomTab>
      </BottomTabs>
      <TopOverlay $pt={13} $pl={32}>
        <OverlayLine $fs={68.5} $sx={1.088}>
          Подадим код 1010 (10)
        </OverlayLine>
        <OverlayLine $fs={72.5} $mt={13}>
          Ожидаемое значение
        </OverlayLine>
        <OverlayLine $fs={70} $mt={10} $sx={1.085}>
          D*10 = 390 мВ
        </OverlayLine>
      </TopOverlay>
      <BottomOverlay $pt={74} $pl={513}>
        <OverlayLine $fs={96} $sx={1.057}>
          Подтверждено
        </OverlayLine>
      </BottomOverlay>
      <WindowFrame />
    </Root>
  );
}
